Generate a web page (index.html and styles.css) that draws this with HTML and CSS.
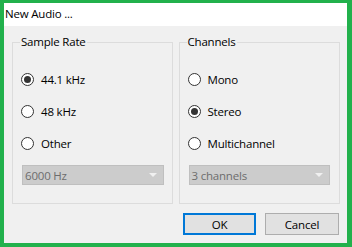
FILE: index.html
```html
<!DOCTYPE html>
<html lang="en">
<head>
  <meta charset="UTF-8">
  <title>New Audio ...</title>
  <link rel="stylesheet" href="styles.css">
</head>
<body>

  <div class="window">
    <div class="titlebar">New Audio ...</div>

    <div class="content">
      <div class="groups">
        <fieldset class="group">
          <legend>Sample Rate</legend>
          <div class="options">
            <div class="option"><span class="radio checked"></span>44.1 kHz</div>
            <div class="option"><span class="radio"></span>48 kHz</div>
            <div class="option"><span class="radio"></span>Other</div>
          </div>
          <div class="combo">
            <span>6000 Hz</span>
            <span class="arrow"></span>
          </div>
        </fieldset>

        <fieldset class="group">
          <legend>Channels</legend>
          <div class="options">
            <div class="option"><span class="radio"></span>Mono</div>
            <div class="option"><span class="radio checked"></span>Stereo</div>
            <div class="option"><span class="radio"></span>Multichannel</div>
          </div>
          <div class="combo">
            <span>3 channels</span>
            <span class="arrow"></span>
          </div>
        </fieldset>
      </div>

      <div class="buttons">
        <button class="btn default">OK</button>
        <button class="btn">Cancel</button>
      </div>
    </div>
  </div>

</body>
</html>
```

FILE: styles.css
```css
body{
  margin: 0;
  font-family: "Open Sans", "Noto Sans", sans-serif;
  font-size: 11.5px;
  letter-spacing: -0.2px;
  color: #000;
}

.window{
  width: 352px;
  height: 247px;
  box-sizing: border-box;
  border-style: solid;
  border-color: #22b14c;
  border-width: 3px 5px 4px 4px;
  background-color: #f0f0f0;
  display: flex;
  flex-direction: column;
}

.titlebar{
  height: 23px;
  line-height: 22px;
  background-color: #fff;
  padding-left: 1px;
}

.content{
  padding: 8px 7px 0 8px;
}

.groups{
  display: flex;
  gap: 6px;
}

fieldset.group{
  margin: 0;
  padding: 0 8px 18px 9px;
  border: 1px solid #dcdcdc;
  border-radius: 0;
  min-width: 0;
}

fieldset.group:first-child{
  width: 161px;
  box-sizing: border-box;
}

fieldset.group:last-child{
  width: 162px;
  box-sizing: border-box;
  padding-right: 9px;
}

legend{
  padding: 0 1px;
  margin-left: -2px;
  line-height: 16px;
}

.options{
  display: flex;
  flex-direction: column;
  gap: 16px;
  padding-top: 21px;
}

.option{
  display: flex;
  align-items: center;
  height: 16px;
}

.radio{
  width: 11px;
  height: 11px;
  border: 1px solid #333;
  border-radius: 50%;
  background-color: #fff;
  margin-right: 7px;
  margin-left: -1px;
  display: flex;
  align-items: center;
  justify-content: center;
}

.radio.checked::after{
  content: "";
  width: 7px;
  height: 7px;
  border-radius: 50%;
  background-color: #333;
}

.combo{
  margin-top: 14px;
  height: 20px;
  box-sizing: border-box;
  border: 1px solid #bfbfbf;
  background-color: #cccccc;
  color: #6d6d6d;
  display: flex;
  align-items: center;
  justify-content: space-between;
  padding: 0 6px 0 2px;
}

.arrow{
  width: 0;
  height: 0;
  border-left: 4px solid transparent;
  border-right: 4px solid transparent;
  border-top: 4px solid #f0f0f0;
}

.buttons{
  display: flex;
  justify-content: flex-end;
  gap: 9px;
  margin-top: 9px;
  padding-right: 1px;
}

.btn{
  height: 22px;
  box-sizing: border-box;
  font-family: "Open Sans", "Noto Sans", sans-serif;
  font-size: 11.5px;
  letter-spacing: -0.2px;
  background-color: #e1e1e1;
  border: 1px solid #adadad;
  padding: 0;
  color: #000;
}

.btn.default{
  width: 73px;
  border: 2px solid #0078d7;
}

.btn:last-child{
  width: 74px;
}
```
